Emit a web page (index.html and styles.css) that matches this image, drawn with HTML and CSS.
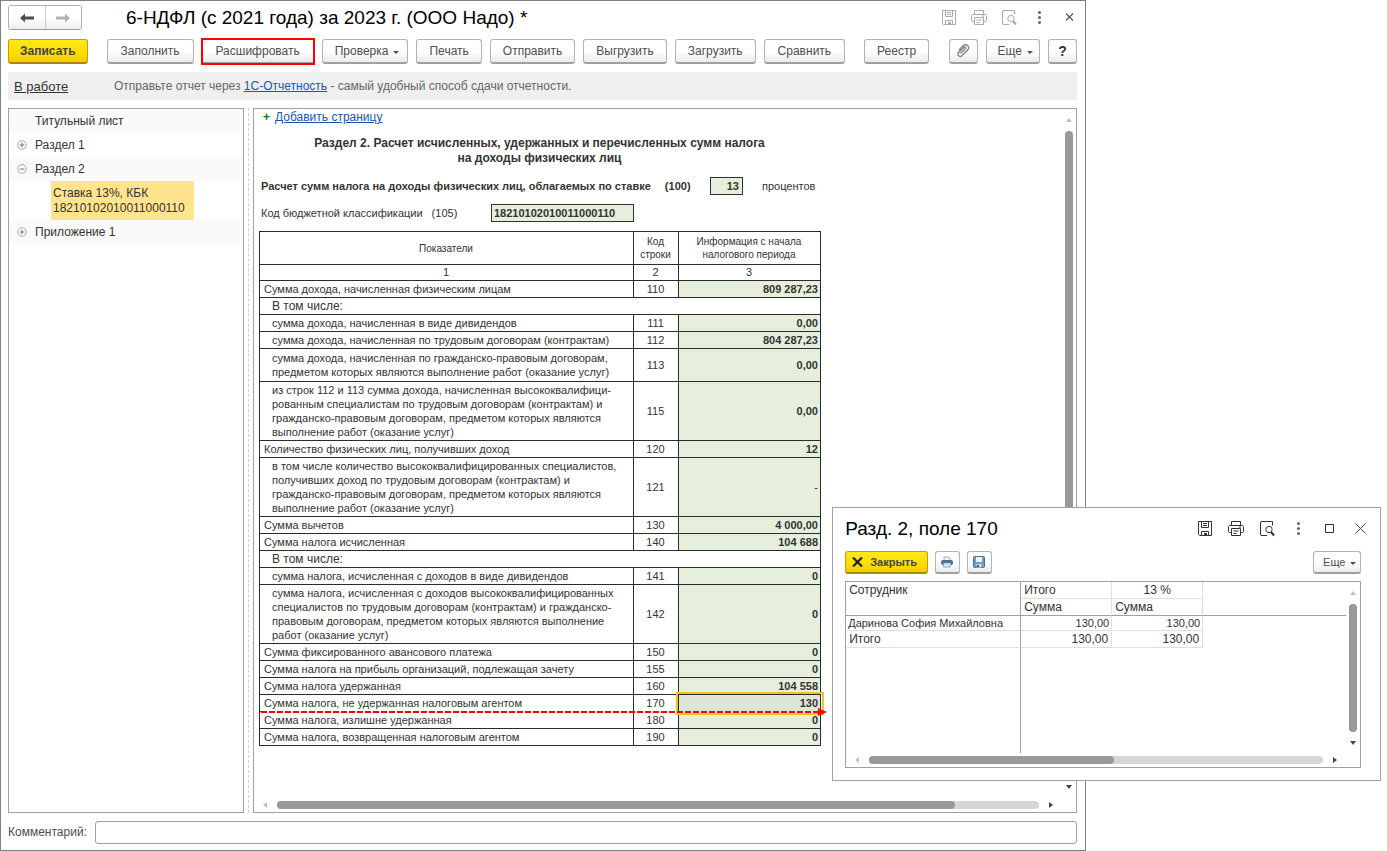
FILE: index.html
```html
<!DOCTYPE html>
<html lang="ru">
<head>
<meta charset="utf-8">
<title>6-НДФЛ (с 2021 года) за 2023 г. (ООО Надо)</title>
<link rel="stylesheet" href="styles.css">
</head>
<body>
<svg class="defs" width="0" height="0" aria-hidden="true">
  <symbol id="i-save" viewBox="0 0 16 16"><path d="M1.500 .5h13v14h-12l-1-1zM4.500 .5v6h7v-6M6 2.500h4M6 4.500h4M4.500 14.500v-4h7v4" fill="none" stroke="currentColor"/><path d="M7 12h3v2.500H7z" fill="currentColor"/></symbol>
  <symbol id="i-print" viewBox="0 0 16 16"><path d="M3.500 4.500v-4h9v4M3.500 11.500h-2l-1-1v-5l1-1h13l1 1v5l-1 1h-2M3.500 7.500h9v7h-9zM5.500 10h5M5.500 12.500h3M11 6h2" fill="none" stroke="currentColor"/></symbol>
  <symbol id="i-preview" viewBox="0 0 16 16"><path d="M8 14.500H2l-.5-.5V1l.5-.5h11.500v4" fill="none" stroke="currentColor"/><circle cx="10" cy="8.500" r="3.200" fill="none" stroke="currentColor"/><path d="M12 11l3 3.500" stroke="currentColor" stroke-width="2"/></symbol>
  <symbol id="i-dots" viewBox="0 0 16 16"><circle cx="8.500" cy="2.500" r="1.500" fill="#666"/><circle cx="8.500" cy="7.500" r="1.500" fill="#666"/><circle cx="8.500" cy="12.500" r="1.500" fill="#666"/></symbol>
  <symbol id="i-close" viewBox="0 0 16 16"><path d="M5 3.500l7 7M12 3.500l-7 7" stroke="currentColor" stroke-width="1.200"/></symbol>
  <symbol id="i-plus" viewBox="0 0 10 10"><circle cx="5" cy="5" r="4.300" fill="#fff" stroke="#aaa"/><path d="M2.500 5h5M5 2.500v5" stroke="#777"/></symbol>
  <symbol id="i-minus" viewBox="0 0 10 10"><circle cx="5" cy="5" r="4.300" fill="#fff" stroke="#aaa"/><path d="M2.500 5h5" stroke="#777"/></symbol>
</svg>

<div class="desktop">
  <main class="window">
    <header class="head">
      <div class="nav">
        <button class="nav-btn" aria-label="Назад"><svg width="14" height="10" viewBox="0 0 14 10"><path d="M0 5l5-4.500v3h9v3H5v3z" fill="#4d4d4d"/></svg></button>
        <button class="nav-btn" aria-label="Вперед"><svg width="14" height="10" viewBox="0 0 14 10"><path d="M14 5L9 .5v3H0v3h9v3z" fill="#b3b3b3"/></svg></button>
      </div>
      <h1 class="title">6-НДФЛ (с 2021 года) за 2023 г. (ООО Надо) *</h1>
      <div class="tools tools-main">
        <button class="icon" aria-label="Сохранить"><svg><use href="#i-save"/></svg></button>
        <button class="icon" aria-label="Печать"><svg><use href="#i-print"/></svg></button>
        <button class="icon" aria-label="Просмотр"><svg><use href="#i-preview"/></svg></button>
        <button class="icon" aria-label="Меню"><svg><use href="#i-dots"/></svg></button>
        <button class="icon dark" aria-label="Закрыть окно"><svg><use href="#i-close"/></svg></button>
      </div>
    </header>

    <div class="toolbar">
      <button class="btn primary">Записать</button>
      <button class="btn roomy sep">Заполнить</button>
      <button class="btn roomy marked">Расшифровать</button>
      <button class="btn drop">Проверка</button>
      <button class="btn">Печать</button>
      <button class="btn">Отправить</button>
      <button class="btn">Выгрузить</button>
      <button class="btn">Загрузить</button>
      <button class="btn roomy">Сравнить</button>
      <button class="btn sep">Реестр</button>
      <button class="btn square push" aria-label="Файлы"><svg width="14" height="14" viewBox="0 0 14 14"><path d="M4.500 9.500l4.800-4.800a1 1 0 0 0-1.500-1.500L2.600 8.400a2.300 2.300 0 0 0 3.300 3.300l5.800-5.800a3 3 0 0 0-4.300-4.300L3 6" fill="none" stroke="#8a8a8a" stroke-width="1.500"/></svg></button>
      <button class="btn drop compact">Еще</button>
      <button class="btn square help">?</button>
    </div>

    <div class="banner">
      <a class="state" href="#">В работе</a>
      <span>Отправьте отчет через <a class="link" href="#">1С-Отчетность</a> - самый удобный способ сдачи отчетности.</span>
    </div>

    <div class="panels">
      <nav class="tree">
        <div class="node odd"><span>Титульный лист</span></div>
        <div class="node"><button class="toggle" aria-label="Развернуть"><svg><use href="#i-plus"/></svg></button><span>Раздел 1</span></div>
        <div class="node odd"><button class="toggle" aria-label="Свернуть"><svg><use href="#i-minus"/></svg></button><span>Раздел 2</span></div>
        <div class="leaf">Ставка 13%, КБК<br>18210102010011000110</div>
        <div class="node odd"><button class="toggle" aria-label="Развернуть"><svg><use href="#i-plus"/></svg></button><span>Приложение 1</span></div>
      </nav>
      <div class="splitter"></div>
      <section class="sheet">
        <div class="report">
          <div class="add"><b class="add-plus">+</b><a class="link" href="#">Добавить страницу</a></div>
          <h2 class="section">Раздел 2. Расчет исчисленных, удержанных и перечисленных сумм налога<br>на доходы физических лиц</h2>
          <div class="field">
            <label class="rate-label" for="rate">Расчет сумм налога на доходы физических лиц, облагаемых по ставке<span class="code">(100)</span></label>
            <input class="cell rate" id="rate" value="13">
            <span class="unit">процентов</span>
          </div>
          <div class="field">
            <label class="kbk-label" for="kbk">Код бюджетной классификации<span class="code">(105)</span></label>
            <input class="cell kbk" id="kbk" value="18210102010011000110">
          </div>
          <table class="grid">
            <colgroup><col class="c-name"><col class="c-code"><col class="c-sum"></colgroup>
            <thead>
              <tr class="caps"><th>Показатели</th><th>Код<br>строки</th><th>Информация с начала<br>налогового периода</th></tr>
              <tr class="nums"><th>1</th><th>2</th><th>3</th></tr>
            </thead>
            <tbody>
              <tr><td>Сумма дохода, начисленная физическим лицам</td><td>110</td><td>809 287,23</td></tr>
              <tr class="group"><td colspan="3">В том числе:</td></tr>
              <tr class="sub"><td>сумма дохода, начисленная в виде дивидендов</td><td>111</td><td>0,00</td></tr>
              <tr class="sub"><td>сумма дохода, начисленная по трудовым договорам (контрактам)</td><td>112</td><td>804 287,23</td></tr>
              <tr class="sub two"><td>сумма дохода, начисленная по гражданско-правовым договорам,<br>предметом которых являются выполнение работ (оказание услуг)</td><td>113</td><td>0,00</td></tr>
              <tr class="sub"><td>из строк 112 и 113 сумма дохода, начисленная высококвалифици-<br>рованным специалистам по трудовым договорам (контрактам) и<br>гражданско-правовым договорам, предметом которых являются<br>выполнение работ (оказание услуг)</td><td>115</td><td>0,00</td></tr>
              <tr><td>Количество физических лиц, получивших доход</td><td>120</td><td>12</td></tr>
              <tr class="sub"><td>в том числе количество высококвалифицированных специалистов,<br>получивших доход по трудовым договорам (контрактам) и<br>гражданско-правовым договорам, предметом которых являются<br>выполнение работ (оказание услуг)</td><td>121</td><td class="empty">-</td></tr>
              <tr><td>Сумма вычетов</td><td>130</td><td>4 000,00</td></tr>
              <tr><td>Сумма налога исчисленная</td><td>140</td><td>104 688</td></tr>
              <tr class="group"><td colspan="3">В том числе:</td></tr>
              <tr class="sub"><td>сумма налога, исчисленная с доходов в виде дивидендов</td><td>141</td><td>0</td></tr>
              <tr class="sub"><td>сумма налога, исчисленная с доходов высококвалифицированных<br>специалистов по трудовым договорам (контрактам) и гражданско-<br>правовым договорам, предметом которых являются выполнение<br>работ (оказание услуг)</td><td>142</td><td>0</td></tr>
              <tr><td>Сумма фиксированного авансового платежа</td><td>150</td><td>0</td></tr>
              <tr><td>Сумма налога на прибыль организаций, подлежащая зачету</td><td>155</td><td>0</td></tr>
              <tr><td>Сумма налога удержанная</td><td>160</td><td>104 558</td></tr>
              <tr class="current"><td>Сумма налога, не удержанная налоговым агентом<span class="arrow"></span></td><td>170</td><td class="selected">130</td></tr>
              <tr><td>Сумма налога, излишне удержанная</td><td>180</td><td>0</td></tr>
              <tr><td>Сумма налога, возвращенная налоговым агентом</td><td>190</td><td>0</td></tr>
            </tbody>
          </table>
        </div>
        <div class="vbar"><i class="tri up"></i><div class="vtrack"><div class="vthumb"></div></div><i class="tri down"></i></div>
        <div class="hbar"><i class="tri left"></i><div class="htrack"><div class="hthumb main-thumb"></div></div><i class="tri right"></i></div>
      </section>
    </div>

    <div class="comment">
      <label class="comment-label" for="comment">Комментарий:</label>
      <input id="comment" class="comment-input">
    </div>
  </main>

  <section class="dialog" role="dialog" aria-labelledby="dlg">
    <header class="dlg-head">
      <h2 class="title" id="dlg">Разд. 2, поле 170</h2>
      <div class="tools tools-dlg">
        <button class="icon" aria-label="Сохранить"><svg><use href="#i-save"/></svg></button>
        <button class="icon" aria-label="Печать"><svg><use href="#i-print"/></svg></button>
        <button class="icon" aria-label="Просмотр"><svg><use href="#i-preview"/></svg></button>
        <button class="icon" aria-label="Меню"><svg><use href="#i-dots"/></svg></button>
        <button class="icon" aria-label="Развернуть окно"><svg viewBox="0 0 16 16"><path d="M4.500 3.500h8v8h-8z" fill="none" stroke="#333"/></svg></button>
        <button class="icon" aria-label="Закрыть окно"><svg viewBox="0 0 16 16"><path d="M3.500 2.500l10 10M13.500 2.500l-10 10" stroke="#444"/></svg></button>
      </div>
    </header>
    <div class="dlg-bar">
      <button class="btn primary small"><svg width="11" height="10" viewBox="0 0 11 10"><path d="M1 .5l9 9M10 .5l-9 9" stroke="#222" stroke-width="2.200"/></svg>Закрыть</button>
      <button class="btn small pic" aria-label="Печать"><svg width="12" height="12" viewBox="0 0 12 12"><path d="M3 1h5l1 1v3H3z" fill="#eef4fa" stroke="#8aa5bf" stroke-width=".8"/><rect y="4" width="12" height="5" rx="2" fill="#4f6f90"/><path d="M2.500 7h7v4h-7z" fill="#dbe8f5" stroke="#7d9ab8" stroke-width=".8"/></svg></button>
      <button class="btn small pic" aria-label="Сохранить"><svg width="12" height="12" viewBox="0 0 12 12"><rect x=".5" y=".5" width="11" height="11" rx="1" fill="#6f9cc8" stroke="#4a6e94"/><path d="M3 1h6v5H3z" fill="#eef5fb"/><path d="M3.500 8h5v3.500h-5z" fill="#cfdfee"/><path d="M4 9h2v2H4z" fill="#3f5f82"/></svg></button>
      <button class="btn small drop more">Еще</button>
    </div>
    <div class="result">
      <div class="result-body">
        <table class="detail">
          <colgroup><col class="d-name"><col class="d-sum"><col class="d-sum"><col></colgroup>
          <thead>
            <tr><th rowspan="2">Сотрудник</th><th>Итого</th><th class="rate-col">13 %</th><td class="rest"></td></tr>
            <tr><th>Сумма</th><th>Сумма</th><td class="rest"></td></tr>
          </thead>
          <tbody>
            <tr class="person"><td>Даринова София Михайловна</td><td>130,00</td><td>130,00</td><td class="rest"></td></tr>
            <tr><td>Итого</td><td>130,00</td><td>130,00</td><td class="rest"></td></tr>
          </tbody>
        </table>
        <div class="tail"></div>
      </div>
      <div class="vbar"><i class="tri up"></i><div class="vtrack"><div class="vthumb"></div></div><i class="tri down"></i></div>
      <div class="hbar"><i class="tri left"></i><div class="htrack"><div class="hthumb dlg-thumb"></div></div><i class="tri right"></i></div>
    </div>
  </section>
</div>
</body>
</html>
```

FILE: styles.css
```css
* { box-sizing: border-box; }
body {
  margin: 0;
  background: #fff;
  color: #333;
  font: 12px/15px "Liberation Sans", Arial, sans-serif;
}
button, input { font: inherit; color: inherit; margin: 0; }
.defs { position: absolute; }
.desktop { position: relative; min-height: 100vh; overflow: hidden; }

.window {
  display: flex;
  flex-direction: column;
  width: 78.3%;
  min-height: 100vh;
  padding: 4px 8px 6px 7px;
  border: 1px solid #808080;
  background: #fff;
}

/* title row */
.head { display: flex; align-items: center; height: 25px; }
.nav { display: flex; width: 74px; height: 25px; border: 1px solid #b0b0b0; border-bottom-color: #999; border-radius: 3px; }
.nav-btn {
  flex: 1;
  display: flex;
  align-items: center;
  justify-content: center;
  padding: 0;
  border: 0;
  background: linear-gradient(#fff, #fff 50%, #eee);
}
.nav-btn + .nav-btn { border-left: 1px solid #ccc; }
.title { margin: 0; color: #000; font-size: 19px; line-height: 24px; font-weight: normal; white-space: nowrap; }
.head .title { margin-left: 44px; }
.tools { display: flex; margin-left: auto; }
.tools-main { gap: 14px; color: #aaa; }
.tools-dlg { gap: 15px; color: #333; }
.icon { width: 16px; height: 16px; padding: 0; border: 0; background: none; color: inherit; }
.icon svg { display: block; width: 16px; height: 16px; }
.dark { color: #555; }

/* command bar */
.toolbar { display: flex; gap: 8px; margin-top: 9px; }
.btn {
  display: flex;
  flex-shrink: 0;
  align-items: center;
  justify-content: center;
  height: 25px;
  padding: 0 12px;
  border: 1px solid #b3b3b3;
  border-bottom: 2px solid #a0a0a0;
  border-radius: 3px;
  background: linear-gradient(#fff, #fff 50%, #ebebeb);
  color: #4d4d4d;
  font-size: 12px;
  white-space: nowrap;
}
.roomy { padding: 0 13px; }
.sep { margin-left: 11px; }
.push { margin-left: auto; }
.primary { padding: 0 11px; border-color: #c0a000; border-bottom-color: #a68b00; background: linear-gradient(#ffe81a, #ffdd00 60%, #f0cb00); color: #444; font-weight: bold; }
.marked { border-radius: 0; outline: 2px solid #f00; outline-offset: -1px; }
.drop { padding: 0 8px 0 12px; }
.drop::after { content: ""; margin: 3px 0 0 5px; border: 3px solid transparent; border-top-color: #4d4d4d; border-bottom: 0; }
.compact { padding: 0 6px 0 11px; }
.square { width: 29px; padding: 0; }
.help { font-size: 14px; font-weight: bold; color: #333; }

.banner { display: flex; align-items: center; height: 28px; margin-top: 8px; padding: 1px 0 0 6px; background: #efefef; color: #666; }
.state { width: 100px; color: #333; font-size: 13px; }
.link { color: #1a56b0; }

/* work area */
.panels { display: flex; flex: 1; margin-top: 8px; }
.tree { width: 236px; border: 1px solid #a0a0a0; }
.node { display: flex; align-items: center; height: 24px; padding-left: 26px; }
.odd { background: #fafafa; }
.toggle { width: 10px; height: 10px; margin: 0 8px 0 -18px; padding: 0; border: 0; background: none; }
.toggle svg { display: block; width: 10px; height: 10px; }
.leaf { width: 143px; height: 39px; margin-left: 42px; padding: 5px 2px; background: #ffe48d; }
.splitter { width: 0; margin: 0 4px; border-left: 1px dashed #d0d0d0; }
.sheet {
  flex: 1;
  display: grid;
  grid-template-columns: 1fr 14px;
  grid-template-rows: 1fr 15px;
  border: 1px solid #a0a0a0;
}
.report { width: 568px; padding-left: 5px; }
.add { display: flex; gap: 5px; height: 17px; padding: 1px 0 0 4px; }
.add-plus { color: #008000; }
.section { margin: 10px 0 11px; padding-right: 2px; font-size: 12px; line-height: 15px; text-align: center; white-space: nowrap; }
.field { display: flex; align-items: center; height: 18px; margin-bottom: 9px; padding-left: 2px; font-size: 11px; white-space: nowrap; }
.rate-label { width: 449px; font-weight: bold; }
.kbk-label { width: 230px; }
.code { margin-left: 9px; }
.rate-label .code { margin-left: 14px; }
.unit { margin-left: 19px; }
.cell { height: 18px; padding: 0 3px; border: 1px solid #333; border-radius: 0; background: #e6eedc; font-weight: bold; }
.rate { width: 33px; text-align: right; }
.kbk { width: 143px; padding: 0 2px; }

.grid { width: 562px; table-layout: fixed; border-collapse: collapse; font-size: 11px; line-height: 14px; }
.c-name { width: 374px; }
.c-code { width: 45px; }
.grid th, .grid td { padding: 1px 2px 1px 4px; border: 1px solid #2b2b2b; text-align: left; white-space: nowrap; }
.grid th { padding: 1px 2px 1px 1px; font-weight: normal; text-align: center; }
.caps { height: 33px; }
.grid .caps th { font-size: 10px; line-height: 13px; }
.nums { height: 16px; line-height: 13px; }
.grid td:nth-child(2) { padding: 1px 2px 1px 1px; text-align: center; }
.grid td:nth-child(3) { background: #e6eedc; font-weight: bold; text-align: right; }
.grid .sub td:first-child { padding-left: 12px; }
.grid .two td { padding-top: 2px; padding-bottom: 2px; }
.grid .group td { padding-left: 12px; font-size: 12px; }
.grid td.empty { font-weight: normal; }
.current { position: relative; }
.grid .current .selected { position: relative; background: #dfe6d8; }
.selected::after { content: ""; position: absolute; inset: -3px -4px -4px -3px; border: 2px solid #f9bf1e; }
.arrow {
  position: absolute;
  z-index: 1;
  left: 1px;
  right: -2px;
  bottom: -1px;
  height: 2px;
  background: repeating-linear-gradient(90deg, #f00 0 6px, #fff 6px 8px);
}
.arrow::after { content: ""; position: absolute; right: -4px; top: -3px; border: 4px solid transparent; border-left: 9px solid #f00; border-right: 0; }

/* scroll bars */
.vbar { display: flex; flex-direction: column; align-items: center; gap: 9px; padding: 9px 0 8px; }
.vtrack { flex: 1; width: 8px; border-radius: 4px; background: #d6d6d6; }
.vthumb { height: 100%; border-radius: 4px; background: #999; }
.hbar { display: flex; align-items: center; gap: 10px; grid-column: 1 / -1; padding: 0 23px 0 9px; }
.htrack { flex: 1; height: 8px; border-radius: 4px; background: #d6d6d6; }
.hthumb { height: 8px; border-radius: 4px; background: #999; }
.main-thumb { width: 89%; }
.dlg-thumb { width: 54%; }
.tri { width: 0; height: 0; border: 3px solid transparent; }
.up { border-top: 0; border-bottom: 4px solid #c0c0c0; }
.down { border-bottom: 0; border-top: 4px solid #444; }
.left { border-left: 0; border-right: 4px solid #c0c0c0; }
.right { border-right: 0; border-left: 4px solid #444; }

.comment { display: flex; align-items: center; margin-top: 8px; color: #4d4d4d; }
.comment-label { width: 87px; }
.comment-input { flex: 1; height: 23px; padding: 0 4px; border: 1px solid #a0a0a0; border-radius: 3px; }

/* details window */
.dialog {
  position: absolute;
  left: 60%;
  top: 507px;
  width: 39.6%;
  padding: 8px 19px 12px 12px;
  border: 1px solid #a0a0a0;
  background: #fff;
}
.dlg-head { display: flex; align-items: center; height: 25px; margin-right: -7px; }
.dlg-bar { display: flex; gap: 7px; margin-top: 10px; }
.small { height: 23px; padding: 0 10px 0 6px; font-size: 11px; }
.small svg { margin-right: 7px; }
.small.pic { width: 25px; padding: 0; }
.pic svg { margin: 0; }
.small.more { margin-left: auto; padding: 0 4px 0 9px; }
.result {
  display: grid;
  grid-template-columns: 1fr 14px;
  grid-template-rows: 171px 14px;
  margin-top: 7px;
  border: 1px solid #a0a0a0;
}
.result-body { display: flex; flex-direction: column; }
.detail { width: 100%; table-layout: fixed; border-collapse: separate; border-spacing: 0; }
.d-name { width: 175px; }
.d-sum { width: 91px; }
.detail th, .detail td { height: 17px; padding: 0 3px; border: 0 solid #e0e0e0; border-width: 0 1px 1px 0; font-weight: normal; line-height: 16px; text-align: left; vertical-align: top; white-space: nowrap; }
.detail .rate-col { text-align: center; }
.detail thead th[rowspan], .detail thead tr:last-child > * { border-bottom-color: #a0a0a0; }
.detail tr > :first-child[rowspan], .detail tbody td:first-child { border-right-color: #a0a0a0; }
.detail tbody td + td { text-align: right; }
.detail .person td { height: 15px; padding: 0 2px; font-size: 11px; line-height: 14px; }
.detail .rest { border-width: 0; }
.detail thead tr:last-child .rest { border-bottom-width: 1px; }
.tail { flex: 1; width: 175px; border-right: 1px solid #a0a0a0; }
```
